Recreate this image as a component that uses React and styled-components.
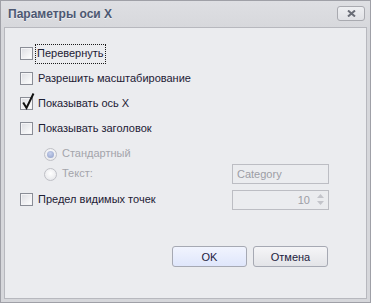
import React from "react";
import styled, { createGlobalStyle } from "styled-components";

const Global = createGlobalStyle`
  html, body { margin: 0; padding: 0; background: #d7d8dc; }
  body { font-family: "Liberation Sans", Arial, sans-serif; font-size: 11px; }
`;

const Window = styled.div`
  width: 371px;
  height: 303px;
  box-sizing: border-box;
  border: 1px solid #9fa0a7;
  background: linear-gradient(#dedfe3, #d6d7db 30px, #d6d7db);
  display: flex;
  flex-direction: column;
`;

const TitleBar = styled.div`
  height: 26px;
  flex: none;
  display: flex;
  align-items: center;
  justify-content: space-between;
  padding: 0 5px 0 7px;
`;

const Title = styled.div`
  font-family: "Liberation Sans", Arial, sans-serif;
  font-size: 12px;
  font-weight: bold;
  color: #4d5872;
  text-shadow: 0 1px 0 rgba(255, 255, 255, 0.6);
  margin-top: -1px;
`;

const CloseButton = styled.div`
  width: 28px;
  height: 15px;
  box-sizing: border-box;
  border: 1px solid #a9aab0;
  border-radius: 3px;
  background: linear-gradient(#eeeff2, #e0e1e5);
  display: flex;
  align-items: center;
  justify-content: center;
  margin-top: -1px;
`;

const Panel = styled.div`
  flex: 1;
  margin: 0 3px 3px 3px;
  border: 1px solid #b7b8be;
  background: #ebecef;
  display: flex;
  flex-direction: column;
  padding: 13px 37px 31px 15px;
`;

const Row = styled.div`
  height: ${(p) => p.h || 25}px;
  margin-top: ${(p) => p.mt || 0}px;
  margin-left: ${(p) => p.indent || 0}px;
  display: flex;
  align-items: center;
  justify-content: space-between;
`;

const Left = styled.div`
  display: flex;
  align-items: center;
`;

const Box = styled.div`
  position: relative;
  width: 13px;
  height: 13px;
  box-sizing: border-box;
  border: 1px solid #8a8d96;
  background: linear-gradient(135deg, #dcdde2, #ffffff);
  box-shadow: inset 0 0 0 1px #f4f4f6;
  flex: none;
`;

const Check = styled.svg`
  position: absolute;
  left: 1px;
  top: -5px;
  overflow: visible;
`;

const Radio = styled.div`
  width: 13px;
  height: 13px;
  box-sizing: border-box;
  border-radius: 50%;
  border: 1px solid #bfc0c6;
  background: radial-gradient(circle at 50% 40%, #ffffff, #e2e3e7);
  display: flex;
  align-items: center;
  justify-content: center;
  flex: none;
`;

const Dot = styled.div`
  width: 7px;
  height: 7px;
  border-radius: 50%;
  background: radial-gradient(circle at 45% 35%, #c8d2ee, #8d9cc6);
`;

const Label = styled.span`
  margin-left: ${(p) => (p.focus ? 2 : 3)}px;
  padding: 2px 1px 3px 1px;
  border: 1px dotted ${(p) => (p.focus ? "#1a1a1a" : "transparent")};
  color: ${(p) => (p.disabled ? "#a3a4ab" : "#1d2035")};
  font-size: 11px;
  line-height: 13px;
  white-space: nowrap;
`;

const Input = styled.div`
  width: 97px;
  height: 20px;
  box-sizing: border-box;
  border: 1px solid #bcbdc3;
  background: #ebecef;
  color: #9c9da5;
  display: flex;
  align-items: center;
  justify-content: ${(p) => (p.right ? "flex-end" : "flex-start")};
  padding: ${(p) => (p.right ? "0 3px 0 4px" : "0 4px")};
  font-size: 11px;
`;

const SpinArrows = styled.div`
  display: flex;
  flex-direction: column;
  gap: 3px;
  margin-left: 7px;
  margin-right: 1px;
`;

const Footer = styled.div`
  margin-top: auto;
  display: flex;
  justify-content: flex-end;
  gap: 6px;
  padding-right: 1px;
`;

const Button = styled.div`
  width: 75px;
  height: 21px;
  box-sizing: border-box;
  border: 1px solid #a6a9b3;
  border-radius: 3px;
  background: ${(p) =>
    p.primary
      ? "linear-gradient(#f1f4fe, #dfe6fb)"
      : "linear-gradient(#f5f5f7, #e3e4e8)"};
  color: #1d2240;
  display: flex;
  align-items: center;
  justify-content: center;
  font-size: 11px;
`;

const Checkbox = ({ checked }) => (
  <Box>
    {checked && (
      <Check width="12" height="16" viewBox="0 0 12 16">
        <path d="M1.2 9.5 L4.5 15 L11.5 0.5" fill="none" stroke="#111" strokeWidth="2" strokeLinejoin="miter" />
      </Check>
    )}
  </Box>
);

export default function App() {
  return (
    <>
      <Global />
      <Window>
        <TitleBar>
          <Title>Параметры оси X</Title>
          <CloseButton>
            <svg width="9" height="7" viewBox="0 0 9 7">
              <path d="M1 0.5 L8 6.5 M8 0.5 L1 6.5" stroke="#6a6d77" strokeWidth="2" />
            </svg>
          </CloseButton>
        </TitleBar>
        <Panel>
          <Row>
            <Left>
              <Checkbox />
              <Label focus>Перевернуть</Label>
            </Left>
          </Row>
          <Row>
            <Left>
              <Checkbox />
              <Label>Разрешить масштабирование</Label>
            </Left>
          </Row>
          <Row>
            <Left>
              <Checkbox checked />
              <Label>Показывать ось X</Label>
            </Left>
          </Row>
          <Row>
            <Left>
              <Checkbox />
              <Label>Показывать заголовок</Label>
            </Left>
          </Row>
          <Row h={20} mt={3} indent={24}>
            <Left>
              <Radio>
                <Dot />
              </Radio>
              <Label disabled>Стандартный</Label>
            </Left>
          </Row>
          <Row h={20} indent={24}>
            <Left>
              <Radio />
              <Label disabled>Текст:</Label>
            </Left>
            <Input>Category</Input>
          </Row>
          <Row mt={3}>
            <Left>
              <Checkbox />
              <Label>Предел видимых точек</Label>
            </Left>
            <Input right>
              10
              <SpinArrows>
                <svg width="7" height="4" viewBox="0 0 7 4">
                  <path d="M0 4 L3.5 0 L7 4 Z" fill="#c3c4ca" />
                </svg>
                <svg width="7" height="4" viewBox="0 0 7 4">
                  <path d="M0 0 L3.5 4 L7 0 Z" fill="#c3c4ca" />
                </svg>
              </SpinArrows>
            </Input>
          </Row>
          <Footer>
            <Button primary>OK</Button>
            <Button>Отмена</Button>
          </Footer>
        </Panel>
      </Window>
    </>
  );
}
